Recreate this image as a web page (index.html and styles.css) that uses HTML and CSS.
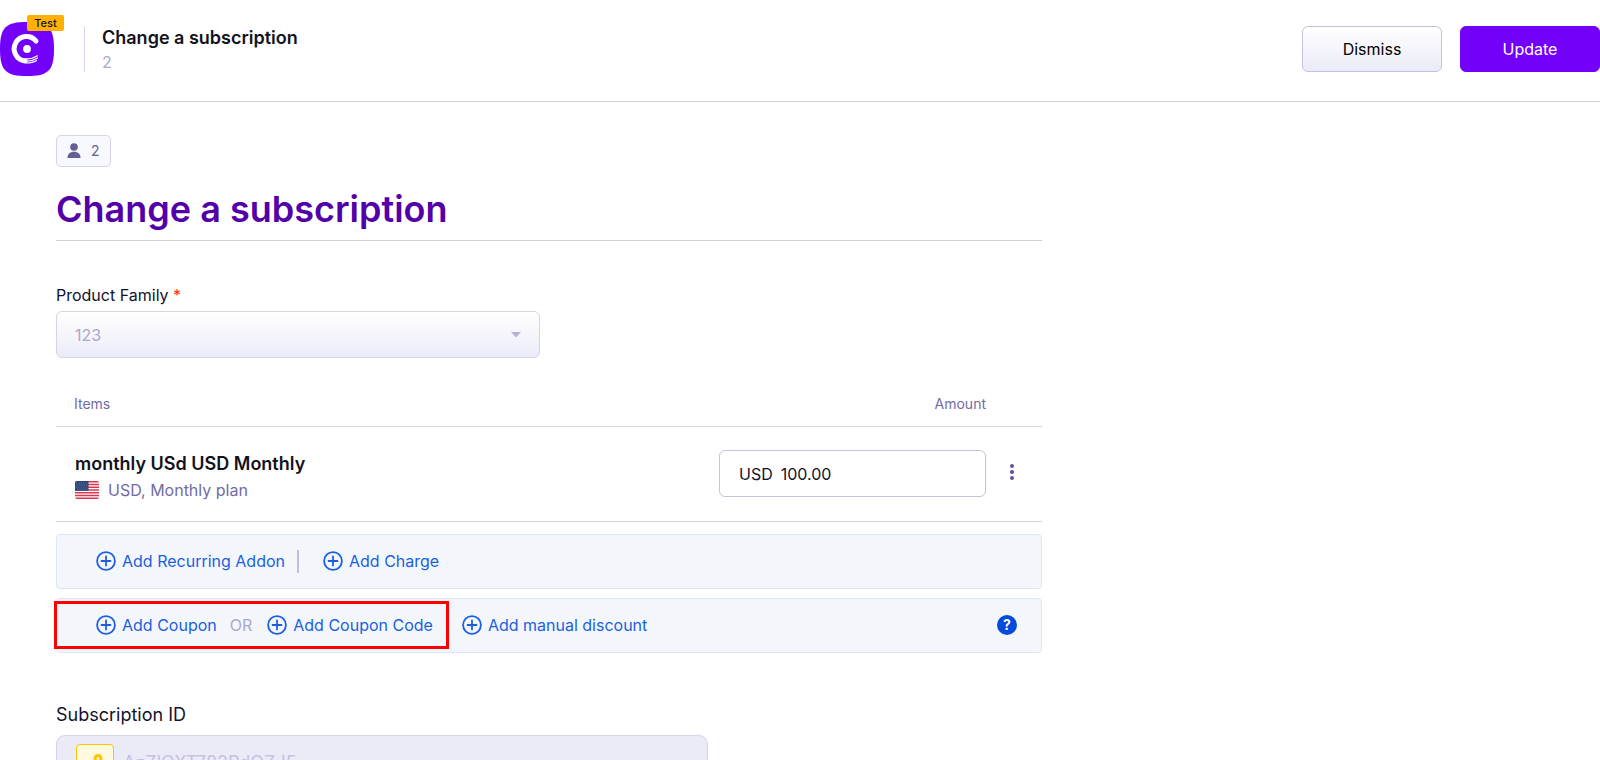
FILE: index.html
```
<!DOCTYPE html>
<html lang="en">
<head>
    <meta charset="UTF-8">
    <meta name="viewport" content="width=device-width, initial-scale=1.0">
    <title>Change a subscription</title>
    <link rel="stylesheet" href="styles.css">
</head>
<body>

    <!-- plus icon shared by all the add links -->
    <svg class="sprite" aria-hidden="true">
        <symbol id="plus" viewBox="0 0 20 20">
            <circle cx="10" cy="10" r="8.9" fill="none" stroke="currentColor" stroke-width="1.8"/>
            <path d="M10 5.5v9M5.5 10h9" stroke="currentColor" stroke-width="1.8" stroke-linecap="round"/>
        </symbol>
    </svg>

    <header class="topbar">
        <div class="logo">
            <svg width="54" height="54" viewBox="0 0 54 54" aria-hidden="true">
                <path d="M27 0C48 0 54 5 54 27S48 54 27 54 0 49 0 27 6 0 27 0z" fill="#7300f9"/>
                <path d="M36 19A12.3 12.3 0 1 0 25 39" fill="none" stroke="#fff" stroke-width="5" stroke-linecap="round"/>
                <circle cx="27" cy="27" r="3.9" fill="#fff"/>
                <path d="M25 36.8c5 .5 9-.8 12.500-3M25 39c5 .5 9-.8 12.500-3M26 41c4 0 7.500-.5 10.500-2.500" fill="none" stroke="#fff" stroke-width="1.200" stroke-linecap="round"/>
            </svg>
            <span class="badge">Test</span>
        </div>
        <div class="topbar-title">
            <strong>Change a subscription</strong>
            <span>2</span>
        </div>
        <div class="actions">
            <button type="button" class="btn">Dismiss</button>
            <button type="button" class="btn btn-primary">Update</button>
        </div>
    </header>

    <main class="content">
        <a href="#" class="customer">
            <svg width="14" height="16" viewBox="0 0 14 16" aria-hidden="true">
                <circle cx="7" cy="4" r="3.800" fill="#646094"/>
                <path d="M.5 15c0-4 2.500-6.200 6.500-6.200s6.500 2.200 6.500 6.200z" fill="#646094"/>
            </svg>
            2
        </a>

        <h1>Change a subscription</h1>

        <form>
            <div class="family">
                <label for="family">Product Family <span class="required">*</span></label>
                <div class="select-box">
                    <select id="family" disabled>
                        <option>123</option>
                    </select>
                    <svg width="10" height="6" viewBox="0 0 10 6" aria-hidden="true"><path d="M0 0h10L5 5.500z" fill="#b5b1d6"/></svg>
                </div>
            </div>

            <table class="items">
                <thead>
                    <tr>
                        <th>Items</th>
                        <th class="amount">Amount</th>
                        <th class="menu"></th>
                    </tr>
                </thead>
                <tbody>
                    <tr>
                        <td class="item">
                            <div class="item-name">monthly USd USD Monthly</div>
                            <div class="item-plan">
                                <svg width="24" height="18" viewBox="0 0 24 18" aria-hidden="true">
                                    <clipPath id="flag"><rect width="24" height="18" rx="2"/></clipPath>
                                    <g clip-path="url(#flag)">
                                        <path fill="#fff" d="M0 0h24v18H0z"/>
                                        <path stroke="#d9364f" stroke-width="1.400" d="M0 .7h24M0 3.500h24M0 6.200h24M0 9h24M0 11.800h24M0 14.500h24M0 17.300h24"/>
                                        <path fill="#2f4577" d="M0 0h13.500v9.700H0z"/>
                                        <path stroke="#7285b3" stroke-width=".8" stroke-dasharray="1 1.400" d="M1 2h12M2 4h11M1 6h12M2 8h11"/>
                                    </g>
                                </svg>
                                USD, Monthly plan
                            </div>
                        </td>
                        <td class="amount">
                            <div class="price">
                                <label for="price">USD</label>
                                <input type="text" id="price" value="100.00">
                            </div>
                        </td>
                        <td class="menu">
                            <button type="button" class="dots" aria-label="More">
                                <svg width="4" height="16" viewBox="0 0 4 16" aria-hidden="true">
                                    <g fill="#5d5791"><circle cx="2" cy="2" r="2"/><circle cx="2" cy="8" r="2"/><circle cx="2" cy="14" r="2"/></g>
                                </svg>
                            </button>
                        </td>
                    </tr>
                </tbody>
            </table>

            <div class="add-bar">
                <a href="#" class="add"><svg><use href="#plus"/></svg>Add Recurring Addon</a>
                <span class="divider"></span>
                <a href="#" class="add"><svg><use href="#plus"/></svg>Add Charge</a>
            </div>

            <div class="add-bar">
                <div class="coupons">
                    <a href="#" class="add"><svg><use href="#plus"/></svg>Add Coupon</a>
                    <span class="or">OR</span>
                    <a href="#" class="add"><svg><use href="#plus"/></svg>Add Coupon Code</a>
                    <span class="highlight"></span>
                </div>
                <a href="#" class="add"><svg><use href="#plus"/></svg>Add manual discount</a>
                <button type="button" class="help">?</button>
            </div>

            <div class="sub-id">
                <label for="subId">Subscription ID</label>
                <div class="sub-box">
                    <span class="key">
                        <svg width="20" height="20" viewBox="0 0 20 20" aria-hidden="true">
                            <circle cx="13" cy="5.500" r="3" fill="none" stroke="#fec400" stroke-width="3"/>
                            <path d="M10.500 8L3 15.500M5 13.500l2 2" stroke="#fec400" stroke-width="2.500"/>
                        </svg>
                    </span>
                    <input type="text" id="subId" value="AzZlQXT782RdQZJ5" disabled>
                </div>
            </div>
        </form>
    </main>

</body>
</html>
```
FILE: styles.css
```
* {
    box-sizing: border-box;
}

body {
    margin: 0;
    font-family: Inter, "Liberation Sans", sans-serif;
    font-size: 16px;
    line-height: 24px;
    color: #12122c;
    background-color: #fff;
}

button, input, select {
    font: inherit;
}

a {
    text-decoration: none;
}

svg {
    flex: none;
}

.sprite {
    display: none;
}

.topbar {
    display: flex;
    align-items: flex-start;
    height: 102px;
    padding-top: 26px;
    border-bottom: 1px solid #d3d3d9;
}

.logo {
    position: relative;
    width: 84px;
    height: 46px;
    margin-top: -4px;
    flex: none;
}

.badge {
    position: absolute;
    top: -7px;
    left: 27px;
    width: 37px;
    height: 16px;
    border-radius: 2px;
    background-color: #ffb000;
    color: #12122c;
    font-size: 11px;
    font-weight: 500;
    line-height: 17px;
    text-align: center;
}

.topbar-title {
    display: flex;
    flex-direction: column;
    height: 46px;
    padding-left: 17px;
    border-left: 1px solid #d5d3ec;
    color: #aba7cc;
}

.topbar-title strong {
    font-size: 18px;
    font-weight: 600;
    color: #12121c;
}

.actions {
    display: flex;
    gap: 18px;
    margin-left: auto;
}

.btn {
    width: 140px;
    height: 46px;
    border: 1px solid #c5c1df;
    border-radius: 6px;
    background: linear-gradient(#fff, #ebebf8);
    color: #000;
    cursor: pointer;
}

.btn-primary {
    border-color: #7300f9;
    background: #7300f9;
    color: #fff;
}

.content {
    max-width: 1042px;
    padding: 33px 0 0 56px;
}

.customer {
    display: inline-flex;
    align-items: center;
    gap: 10px;
    height: 32px;
    padding: 0 10px;
    border: 1px solid #d5d3ec;
    border-radius: 5px;
    background-color: #f8f8ff;
    color: #646094;
    font-size: 14px;
    vertical-align: top;
}

h1 {
    margin: 18px 0 42px;
    padding-bottom: 7px;
    border-bottom: 1px solid #d0d0d6;
    color: #5300a9;
    font-size: 36px;
    font-weight: 600;
    line-height: 48px;
}

label {
    display: block;
}

.family {
    width: 484px;
}

.required {
    color: #ff2a13;
}

.select-box {
    display: flex;
    align-items: center;
    height: 47px;
    margin-top: 4px;
    padding: 0 18px;
    border: 1px solid #d5d3ec;
    border-radius: 6px;
    background: linear-gradient(#fff, #ebebf8);
}

.select-box select {
    flex: 1;
    border: 0;
    appearance: none;
    background: none;
    color: #aba7cc;
    opacity: 1;
}

.items {
    width: 100%;
    margin-top: 24px;
    border-collapse: collapse;
}

.items tr {
    border-bottom: 1px solid #d5d3ec;
}

.items th {
    height: 44px;
    padding: 0 0 0 18px;
    color: #716ca3;
    font-size: 14px;
    font-weight: 400;
    text-align: left;
}

.items td {
    height: 95px;
    padding: 0 0 0 19px;
}

.items .amount {
    width: 286px;
    text-align: right;
}

.items .menu {
    width: 56px;
    padding: 0 4px 0 0;
    text-align: center;
}

.items .item {
    padding-top: 6px;
}

.item-name {
    color: #12121c;
    font-size: 18px;
    font-weight: 600;
    line-height: 26px;
}

.item-plan {
    display: flex;
    align-items: center;
    gap: 9px;
    color: #716ca3;
    line-height: 26px;
}

.price {
    display: flex;
    align-items: center;
    gap: 8px;
    height: 47px;
    padding: 0 19px;
    border: 1px solid #c5c1df;
    border-radius: 6px;
    color: #12122c;
}

.price input {
    flex: 1;
    width: 0;
    padding: 0;
    border: 0;
    outline: 0;
    color: inherit;
}

.dots {
    padding: 4px;
    border: 0;
    background: none;
    cursor: pointer;
}

.add-bar {
    display: flex;
    align-items: center;
    height: 55px;
    margin-top: 9px;
    padding: 0 24px 0 39px;
    border: 1px solid #d9e6fc;
    border-radius: 4px;
    background-color: #f3f7fc;
}

.items + .add-bar {
    margin-top: 12px;
}

.add {
    display: flex;
    align-items: center;
    gap: 6px;
    color: #1b5fe0;
}

.add svg {
    width: 20px;
    height: 20px;
}

.divider {
    width: 2px;
    height: 23px;
    margin: 0 24px 0 12px;
    background-color: #c0bedb;
}

.coupons {
    position: relative;
    display: flex;
    align-items: center;
    margin-right: 29px;
}

.or {
    margin: 0 15px 0 13px;
    color: #aba7cc;
}

/* red frame around the coupon links */
.highlight {
    position: absolute;
    inset: -12px -16px -12px -42px;
    border: 3px solid #f00;
}

.help {
    width: 20px;
    height: 20px;
    margin-left: auto;
    padding: 0;
    border: 0;
    border-radius: 50%;
    background-color: #044bd9;
    color: #fff;
    font-size: 14px;
    font-weight: 700;
    line-height: 20px;
}

.sub-id {
    width: 652px;
    margin-top: 50px;
}

.sub-id label {
    font-size: 18px;
}

.sub-box {
    display: flex;
    align-items: center;
    gap: 9px;
    height: 56px;
    margin-top: 8px;
    padding: 0 19px;
    border: 1px solid #d5d3ec;
    border-radius: 9px;
    background-color: #ebebf8;
}

.key {
    display: flex;
    align-items: center;
    justify-content: center;
    width: 38px;
    height: 38px;
    border: 1px solid #fec400;
    border-radius: 4px;
    background-color: #fff9e0;
}

.sub-box input {
    flex: 1;
    padding: 0;
    border: 0;
    background: none;
    color: #c5c1df;
    font-size: 18px;
}
```
